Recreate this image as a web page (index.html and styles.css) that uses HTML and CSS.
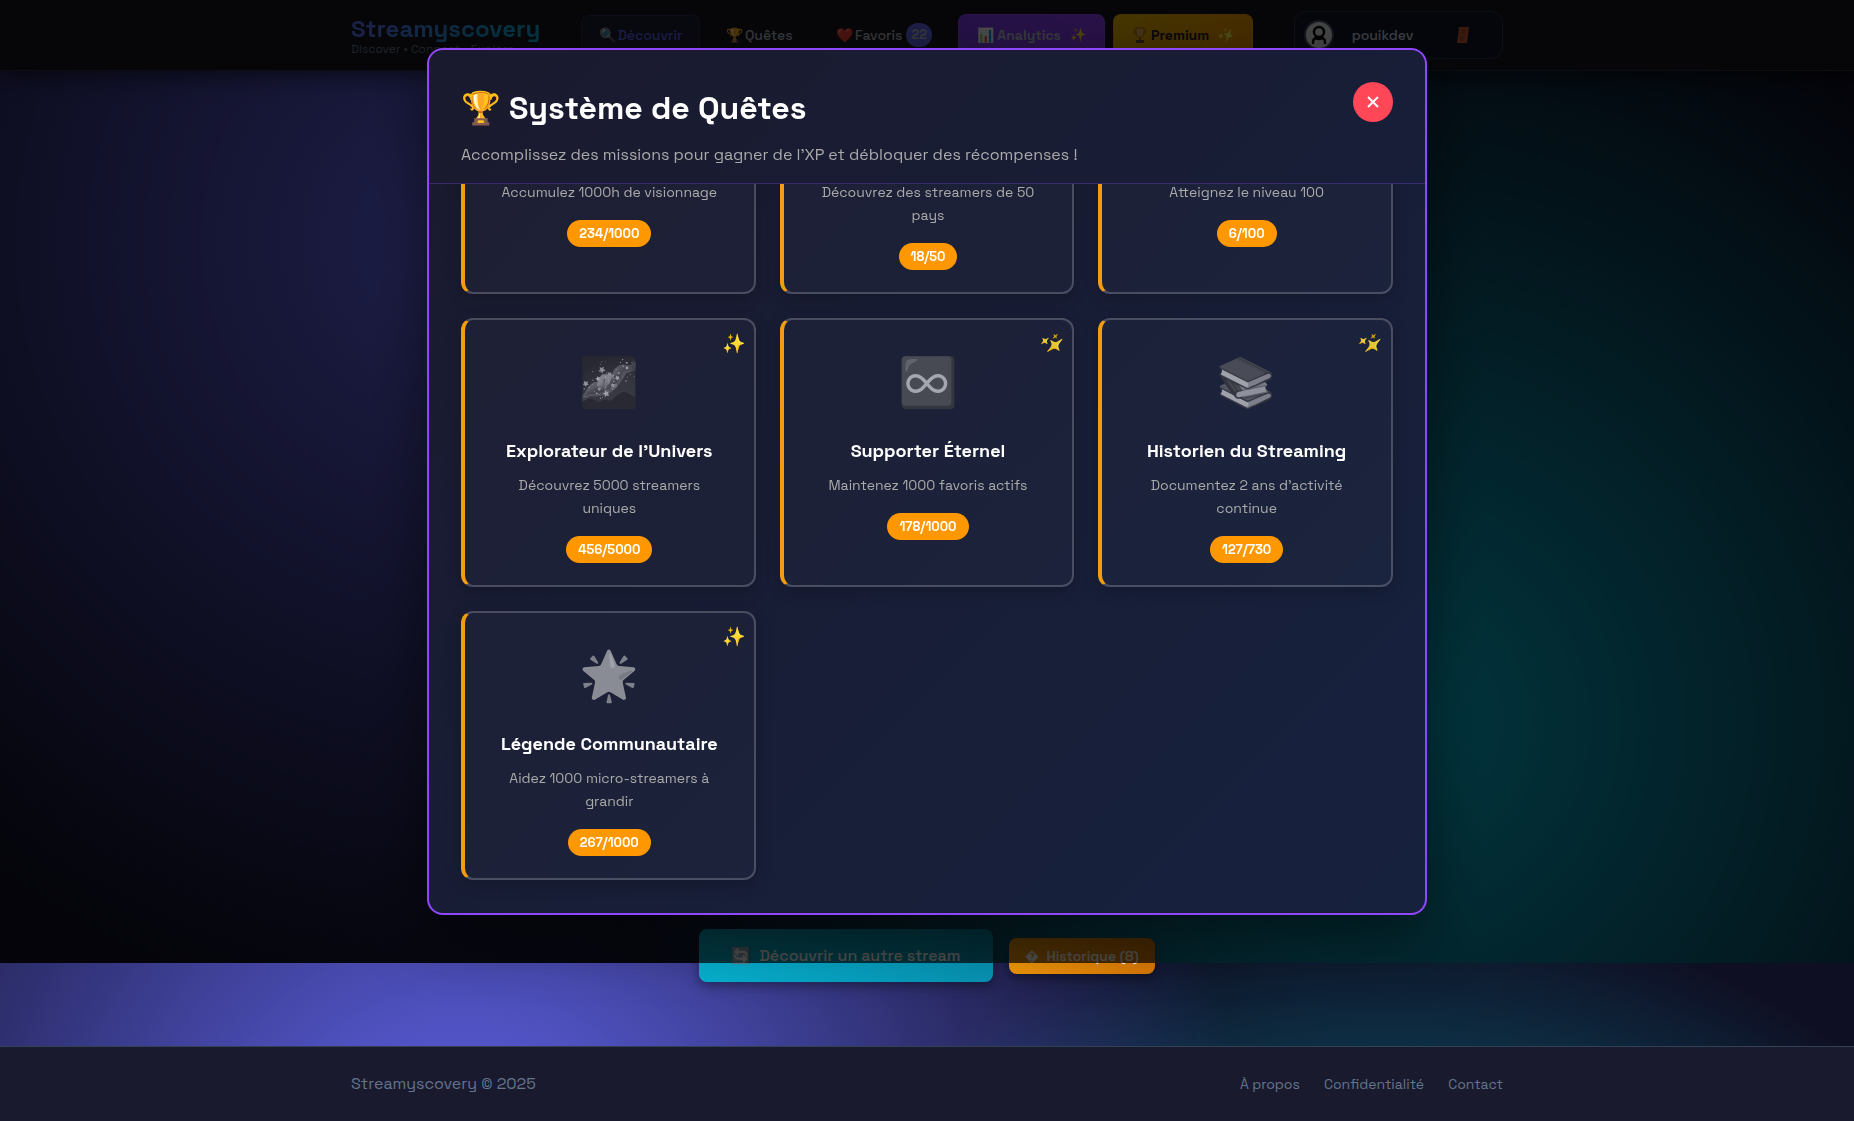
FILE: index.html
```html
<!DOCTYPE html>
<html lang="fr">
<head>
<meta charset="utf-8">
<meta name="viewport" content="width=device-width, initial-scale=1">
<title>Streamyscovery</title>
<link rel="stylesheet" href="styles.css">
</head>
<body>
<header class="topbar">
  <div class="container topbar-row">
    <a class="brand" href="#">
      <span class="brand-name">Streamyscovery</span>
      <span class="brand-tag">Discover • Connect • Explore</span>
    </a>
    <nav class="nav">
      <a class="nav-link is-active" href="#"><span class="emoji">🔍</span>Découvrir</a>
      <a class="nav-link" href="#"><span class="emoji">🏆</span>Quêtes</a>
      <a class="nav-link" href="#"><span class="emoji">❤️</span>Favoris<span class="count">22</span></a>
      <a class="nav-link nav-cta nav-analytics" href="#"><span class="emoji">📊</span>Analytics<span class="spark">✨</span></a>
      <a class="nav-link nav-cta nav-premium" href="#">
        <svg class="cup" viewBox="0 0 16 18" aria-hidden="true">
          <path d="M4 2h8v4q0 5-4 5t-4-5z" fill="#e8b04a" stroke="#b5651d"/>
          <path d="M4 4H2q0 4 3 5M12 4h2q0 4-3 5" fill="none" stroke="#b5651d"/>
          <path d="M8 11v3" stroke="#b5651d" stroke-width="2"/>
          <path d="M4 14h8v3H4z" fill="#6b4630"/>
        </svg>Premium<span class="spark spark-faded">✨</span></a>
    </nav>
    <div class="user">
      <svg class="avatar" viewBox="0 0 30 30" aria-hidden="true">
        <circle cx="15" cy="15" r="14" fill="#fff" stroke="#475569" stroke-width="2"/>
        <circle cx="15" cy="12" r="5" fill="none" stroke="#000" stroke-width="2.500"/>
        <path d="M9 23v-1q0-3 3-4 3 2 6 0 3 1 3 4v1" fill="none" stroke="#000" stroke-width="2.500" stroke-linecap="round"/>
      </svg>
      <span class="user-name">pouikdev</span>
      <button class="logout" type="button" aria-label="Déconnexion">
        <svg viewBox="0 0 14 18" aria-hidden="true"><path d="M3 1h10l-2 16H1z" fill="#c75b2c"/><path d="M5 3h5l-1 5H4zM4 10h5l-1 5H3z" fill="#a84a20"/></svg>
      </button>
    </div>
  </div>
</header>

<main class="stage">
  <div class="actions">
    <button class="btn btn-next" type="button"><span class="emoji">🔄</span>Découvrir un autre stream</button>
    <button class="btn btn-history" type="button"><span>�</span>Historique (8)</button>
  </div>
</main>

<footer class="footer">
  <div class="container footer-row">
    <span>Streamyscovery © 2025</span>
    <nav class="footer-links">
      <a href="#">À propos</a>
      <a href="#">Confidentialité</a>
      <a href="#">Contact</a>
    </nav>
  </div>
</footer>

<div class="overlay">
  <section class="modal" role="dialog" aria-labelledby="modal-title">
    <header class="modal-head">
      <div>
        <h2 class="modal-title" id="modal-title">🏆 Système de Quêtes</h2>
        <p class="modal-sub">Accomplissez des missions pour gagner de l’XP et débloquer des récompenses !</p>
      </div>
      <button class="close" type="button" aria-label="Fermer"><svg viewBox="0 0 12 12" aria-hidden="true"><path d="M1 1l10 10M11 1L1 11"/></svg></button>
    </header>
    <div class="modal-body">
      <div class="quests">
        <article class="quest">
          <div class="quest-icon"></div>
          <h3 class="quest-title"></h3>
          <p class="quest-desc">Accumulez 1000h de visionnage</p>
          <span class="pill">234/1000</span>
        </article>
        <article class="quest">
          <div class="quest-icon"></div>
          <h3 class="quest-title"></h3>
          <p class="quest-desc">Découvrez des streamers de 50 pays</p>
          <span class="pill">18/50</span>
        </article>
        <article class="quest">
          <div class="quest-icon"></div>
          <h3 class="quest-title"></h3>
          <p class="quest-desc">Atteignez le niveau 100</p>
          <span class="pill">6/100</span>
        </article>
        <article class="quest">
          <span class="quest-spark">✨</span>
          <div class="quest-icon">🌌</div>
          <h3 class="quest-title">Explorateur de l’Univers</h3>
          <p class="quest-desc">Découvrez 5000 streamers uniques</p>
          <span class="pill">456/5000</span>
        </article>
        <article class="quest">
          <span class="quest-spark spark-turned">✨</span>
          <div class="quest-icon">♾️</div>
          <h3 class="quest-title">Supporter Éternel</h3>
          <p class="quest-desc">Maintenez 1000 favoris actifs</p>
          <span class="pill">178/1000</span>
        </article>
        <article class="quest">
          <span class="quest-spark spark-turned">✨</span>
          <div class="quest-icon">📚</div>
          <h3 class="quest-title">Historien du Streaming</h3>
          <p class="quest-desc">Documentez 2 ans d’activité continue</p>
          <span class="pill">127/730</span>
        </article>
        <article class="quest">
          <span class="quest-spark">✨</span>
          <div class="quest-icon">🌟</div>
          <h3 class="quest-title">Légende Communautaire</h3>
          <p class="quest-desc">Aidez 1000 micro-streamers à grandir</p>
          <span class="pill">267/1000</span>
        </article>
      </div>
    </div>
  </section>
</div>
</body>
</html>
```
FILE: styles.css
```css
:root {
  --indigo: #6366f1;
  --cyan: #06b6d4;
  --panel: #1a1a2e;
  --line: #334155;
  --fold: 158px;
}

* { box-sizing: border-box; margin: 0; padding: 0; }

body {
  min-height: 100vh;
  display: flex;
  flex-direction: column;
  font-family: "Space Grotesk", Inter, "Noto Color Emoji", sans-serif;
  font-size: 16px;
  line-height: 26px;
  color: #fff;
  background-color: #0f0f23;
  background-image:
    radial-gradient(circle at 25% 25%, #6366f1 0%, transparent 50%),
    radial-gradient(circle at 75% 75%, #06b6d4 0%, transparent 50%);
  background-size: 100% calc(100vh - var(--fold));
}

a { color: inherit; text-decoration: none; }
button { font: inherit; color: inherit; border: 0; background: none; cursor: pointer; }

.container { width: 100%; max-width: 1200px; margin: 0 auto; padding: 0 24px; }

/* top bar */
.topbar {
  background: #17171f;
  border-bottom: 1px solid #2a3040;
  box-shadow: 0 4px 24px rgba(0, 0, 0, .6);
}
.topbar-row { display: flex; align-items: center; height: 70px; }
.brand { display: flex; flex-direction: column; width: 230px; }
.brand-name {
  align-self: flex-start;
  font-size: 24px;
  font-weight: 700;
  line-height: 28px;
  background: linear-gradient(135deg, var(--indigo), var(--cyan));
  -webkit-background-clip: text;
  background-clip: text;
  color: transparent;
}
.brand-tag { font-size: 12px; line-height: 12px; color: #64748b; }
.nav { display: flex; align-items: center; gap: 8px; }
.nav-link {
  display: flex;
  align-items: center;
  gap: 1px;
  height: 40px;
  padding: 0 17px;
  border: 1px solid transparent;
  border-radius: 8px;
  font-size: 14px;
  font-weight: 500;
  color: #b4bcc8;
}
.is-active { color: var(--indigo); background: rgba(99, 102, 241, .1); border-color: rgba(99, 102, 241, .2); }
.count {
  margin-left: 3px;
  padding: 0 5px;
  border-radius: 12px;
  background: var(--indigo);
  font-size: 13px;
  font-weight: 600;
  line-height: 24px;
}
.nav-cta { gap: 3px; height: 42px; padding: 0 18px; font-weight: 700; }
.nav-analytics { background: linear-gradient(135deg, #7c3aed, #8b3cf0); border-color: #9146ff; }
.nav-premium { background: linear-gradient(135deg, #e6b800, #f08c00); color: #1a1a2e; }
.cup { width: 16px; height: 18px; }
.spark { margin-left: 6px; font-size: 13px; }
.spark-turned { transform: rotate(50deg); opacity: .9; }
.spark-faded { transform: rotate(20deg); filter: brightness(1.3); }
.user {
  display: flex;
  align-items: center;
  justify-content: space-between;
  width: 209px;
  height: 48px;
  margin-left: auto;
  padding: 0 32px 0 9px;
  border: 1px solid #2a3448;
  border-radius: 12px;
  background: #0f172a;
}
.avatar { width: 30px; height: 30px; opacity: .9; }
.user-name { font-size: 14px; font-weight: 500; margin-right: 25px; color: #cbd5e1; }
.logout { display: flex; width: 14px; height: 18px; }

/* page actions */
.stage { flex: 1; display: flex; flex-direction: column; justify-content: flex-end; padding-bottom: 64px; }
.actions { display: flex; justify-content: center; align-items: center; gap: 16px; }
.btn { display: flex; align-items: center; gap: 8px; border-radius: 8px; box-shadow: 0 4px 12px rgba(0, 0, 0, .4); font-weight: 500; }
.btn-next { height: 53px; padding: 0 32px; background: linear-gradient(135deg, #06b6d4, #0891b2); }
.btn-history { height: 36px; padding: 0 16px; font-size: 14px; background: linear-gradient(135deg, #f59e0b, #d97706); }

/* footer */
.footer { background: var(--panel); border-top: 1px solid var(--line); padding: 24px 0; color: #64748b; }
.footer-row { display: flex; justify-content: space-between; align-items: center; }
.footer-links { display: flex; gap: 24px; font-size: 14px; }

/* quest dialog */
.overlay {
  position: fixed;
  inset: 0 0 var(--fold);
  display: flex;
  align-items: center;
  justify-content: center;
  background: rgba(0, 0, 0, .7);
}
.modal {
  display: flex;
  flex-direction: column;
  width: 90%;
  max-width: 1000px;
  height: 90%;
  overflow: hidden;
  border: 2px solid #9146ff;
  border-radius: 16px;
  background: linear-gradient(135deg, #1a1a2e, #16213e);
  box-shadow: 0 20px 60px rgba(0, 0, 0, .5);
}
.modal-head {
  display: flex;
  justify-content: space-between;
  align-items: flex-start;
  padding: 32px 32px 15px;
  border-bottom: 1px solid rgba(145, 70, 255, .3);
}
.modal-title { margin-bottom: 8px; font-size: 32px; font-weight: 700; line-height: 52px; }
.modal-sub { color: #aaa; }
.close {
  display: flex;
  align-items: center;
  justify-content: center;
  width: 40px;
  height: 40px;
  border-radius: 50%;
  background: #ff4757;
}
.close svg { width: 12px; height: 12px; fill: none; stroke: #fff; stroke-width: 2; }
.modal-body {
  flex: 1;
  min-height: 0;
  display: flex;
  flex-direction: column;
  justify-content: flex-end;
  overflow: hidden;
  padding: 32px 32px 33px;
}
.quests { display: grid; grid-template-columns: repeat(3, 1fr); gap: 24px; }
.quest {
  position: relative;
  padding: 24px 24px 22px;
  border: 2px solid rgba(255, 255, 255, .2);
  border-left: 4px solid #f39c12;
  border-radius: 12px;
  background: rgba(255, 255, 255, .02);
  box-shadow: 0 4px 16px rgba(0, 0, 0, .2);
  text-align: center;
}
.quest-icon { height: 77px; margin-bottom: 16px; font-size: 48px; line-height: 77px; filter: grayscale(1); opacity: .6; }
.quest-title { height: 28px; margin-bottom: 9px; font-size: 18px; font-weight: 700; line-height: 28px; }
.quest-desc { margin-bottom: 16px; padding: 0 4px; font-size: 14px; line-height: 23px; color: #aaa; }
.pill {
  display: inline-block;
  vertical-align: top;
  padding: 0 12px;
  border-radius: 14px;
  background: #ff9800;
  font-size: 13px;
  font-weight: 700;
  line-height: 27px;
}
.quest-spark { position: absolute; top: 11px; right: 8px; font-size: 19px; }
```
